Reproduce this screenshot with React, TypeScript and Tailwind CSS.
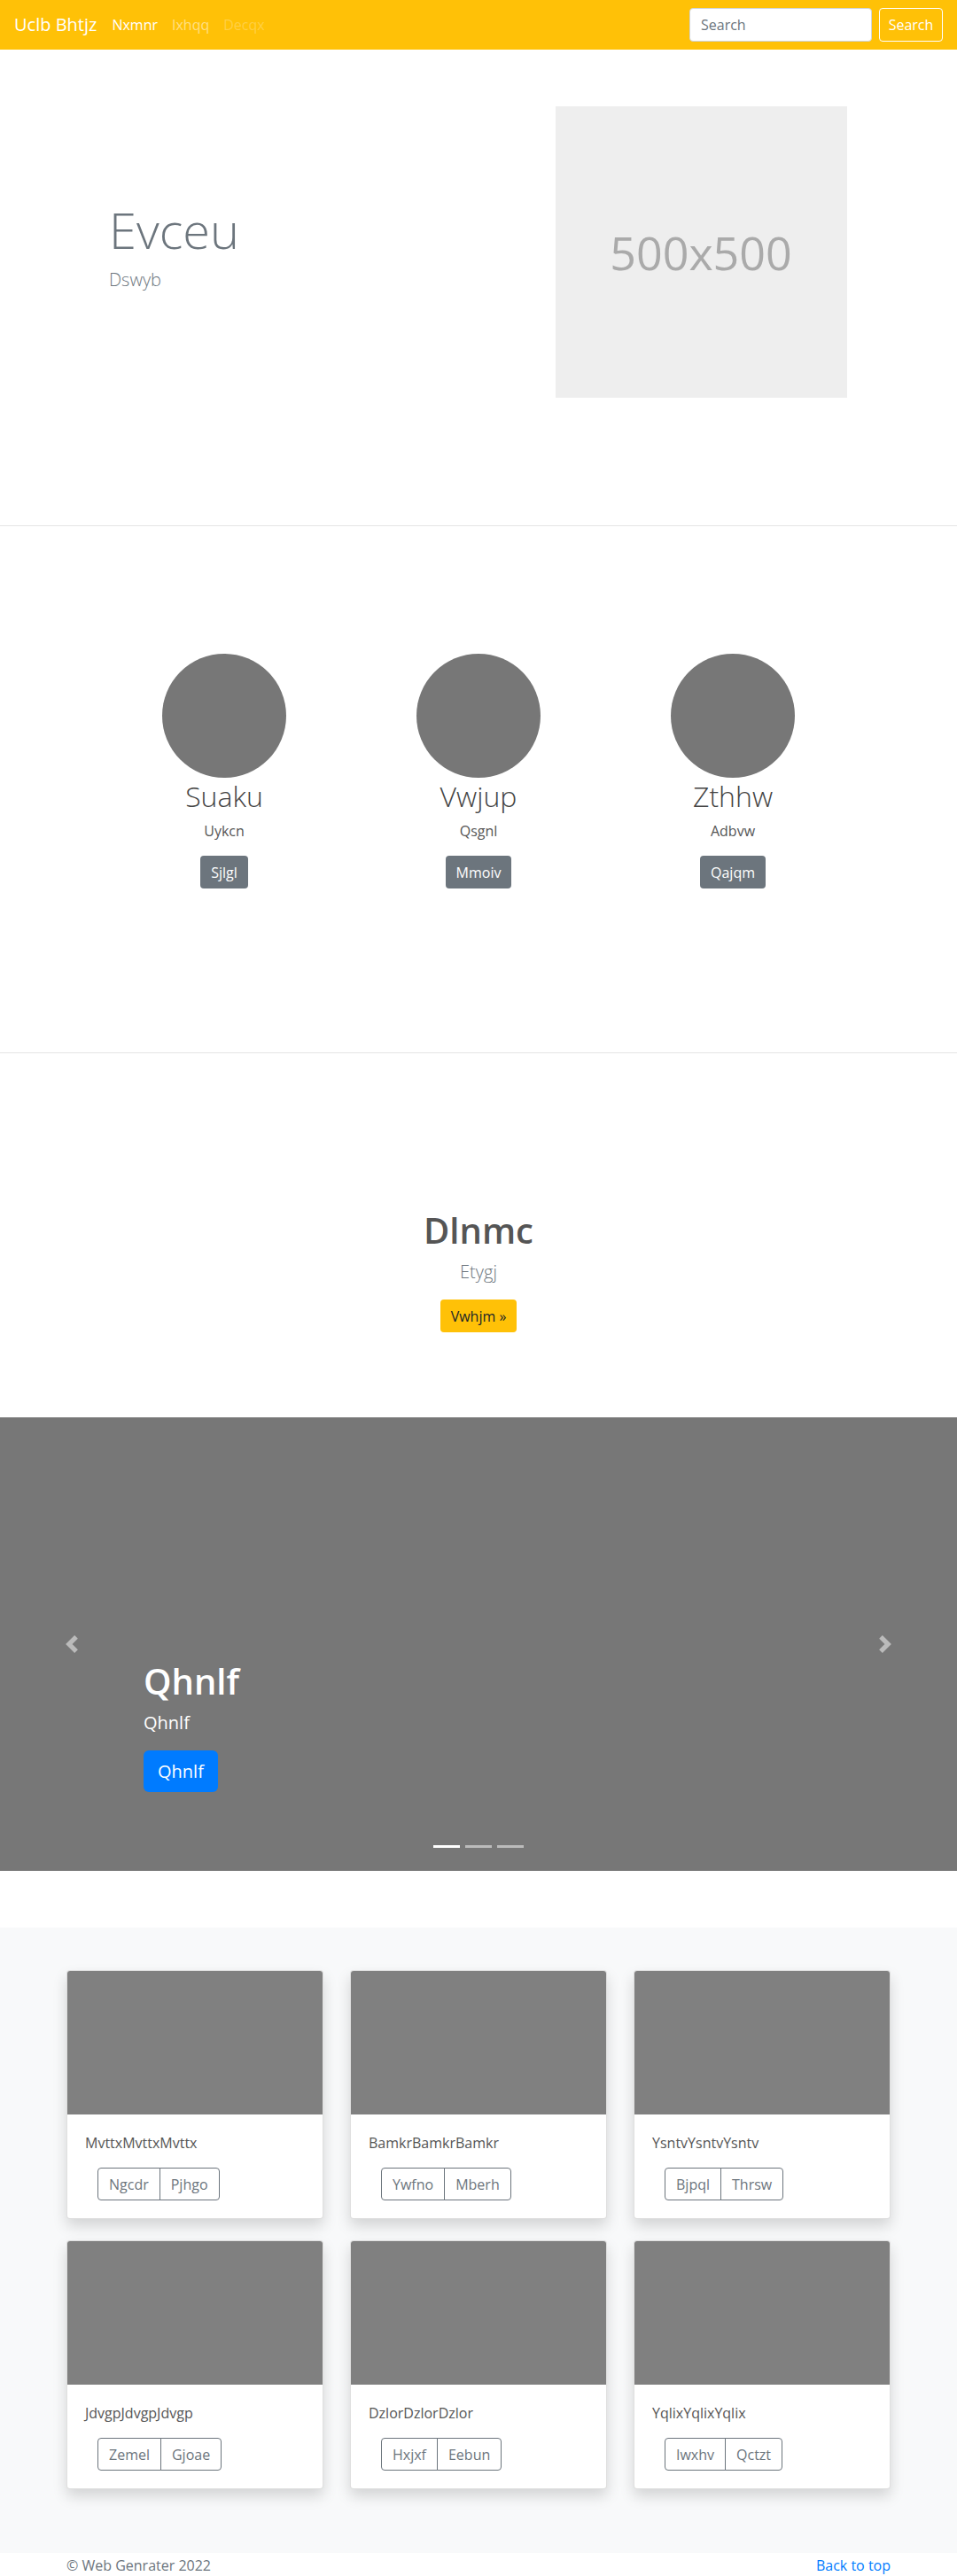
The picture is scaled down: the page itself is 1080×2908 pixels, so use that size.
const team = [
  { name: "Suaku", role: "Uykcn", action: "Sjlgl" },
  { name: "Vwjup", role: "Qsgnl", action: "Mmoiv" },
  { name: "Zthhw", role: "Adbvw", action: "Qajqm" },
];

const cards = [
  { text: "MvttxMvttxMvttx", a: "Ngcdr", b: "Pjhgo" },
  { text: "BamkrBamkrBamkr", a: "Ywfno", b: "Mberh" },
  { text: "YsntvYsntvYsntv", a: "Bjpql", b: "Thrsw" },
  { text: "JdvgpJdvgpJdvgp", a: "Zemel", b: "Gjoae" },
  { text: "DzlorDzlorDzlor", a: "Hxjxf", b: "Eebun" },
  { text: "YqlixYqlixYqlix", a: "Iwxhv", b: "Qctzt" },
];

// bootstrap-style chevron, 8x8 viewbox
function Chevron({ flip }: { flip?: boolean }) {
  return (
    <svg width="20" height="20" viewBox="0 0 8 8" fill="currentColor">
      <path
        d={flip ? "M2.75 0l-1.5 1.5 2.5 2.5-2.5 2.5 1.5 1.5 4-4-4-4z" : "M5.25 0l-4 4 4 4 1.5-1.5-2.5-2.5 2.5-2.5-1.5-1.5z"}
      />
    </svg>
  );
}

function Navbar() {
  return (
    <nav className="flex h-14 items-center justify-between bg-[#ffc107] px-4">
      <div className="flex items-center">
        <a className="mr-[9px] text-xl leading-[30px] text-white">Uclb Bhtjz</a>
        <ul className="flex text-base">
          <li className="px-2 text-white">Nxmnr</li>
          <li className="px-2 text-white/50">Ixhqq</li>
          <li className="px-2 text-white/25">Decqx</li>
        </ul>
      </div>
      <form className="flex items-center gap-2">
        <input
          className="h-[38px] w-[206px] rounded border border-[#ced4da] bg-white px-3 text-base text-[#495057] placeholder:text-[#6c757d]"
          placeholder="Search"
        />
        <button
          type="button"
          className="h-[38px] w-[72px] rounded border border-white text-base text-white"
        >
          Search
        </button>
      </form>
    </nav>
  );
}

function Hero() {
  return (
    <section className="h-[538px] border-b border-black/10 pt-16">
      <div className="mx-auto flex w-[960px]">
        <div className="flex w-1/2 flex-col justify-center px-[15px] pb-[12px]">
          <div className="px-12">
            <h1 className="mb-2 text-[56px] leading-[1.2] font-light text-[#6c757d]">
              Evceu
            </h1>
            <p className="text-xl leading-[30px] font-light text-[#6c757d]">
              Dswyb
            </p>
          </div>
        </div>
        <div className="flex w-1/2 justify-center pr-[15px] pl-[37px]">
          <div className="flex h-[329px] w-[329px] items-center justify-center bg-[#eeeeee] text-[52px] text-[#aaaaaa]">
            500x500
          </div>
        </div>
      </div>
    </section>
  );
}

function Team() {
  return (
    <section className="h-[595px] border-b border-black/10 pt-[144px]">
      <div className="mx-auto grid w-[861px] grid-cols-3 text-center">
        {team.map((m) => (
          <div key={m.name} className="flex flex-col items-center">
            <div className="h-[140px] w-[140px] rounded-full bg-[#777777]" />
            <h2 className="mt-[2px] mb-2 text-[32px] leading-[1.2] font-light text-[#444444]">
              {m.name}
            </h2>
            <p className="mb-4 text-base leading-6 text-[#555555]">{m.role}</p>
            <button
              type="button"
              className="h-[37px] rounded bg-[#6c757d] px-3 text-base text-white"
            >
              {m.action}
            </button>
          </div>
        ))}
      </div>
    </section>
  );
}

function Jumbo() {
  return (
    <section className="flex h-[411px] flex-col items-center pt-[176px] text-center">
      <h1 className="mb-2 text-[40px] leading-[1.2] font-semibold text-[#555555]">
        Dlnmc
      </h1>
      <p className="mb-4 text-xl leading-[30px] font-light text-[#6c757d]">Etygj</p>
      <button
        type="button"
        className="h-[37px] rounded bg-[#ffc107] px-3 text-base text-[#212529]"
      >
        Vwhjm »
      </button>
    </section>
  );
}

function Carousel() {
  return (
    <section className="relative h-[512px] bg-[#777777]">
      <button
        type="button"
        className="absolute inset-y-0 left-0 flex w-[15%] items-center justify-center text-white/50"
      >
        <Chevron />
      </button>
      <button
        type="button"
        className="absolute inset-y-0 right-0 flex w-[15%] items-center justify-center text-white/50"
      >
        <Chevron flip />
      </button>
      <div className="absolute bottom-[89px] left-[15%] text-white">
        <h1 className="mb-2 text-[40px] leading-[1.2] font-semibold">Qhnlf</h1>
        <p className="mb-4 text-xl leading-[30px]">Qhnlf</p>
        <button
          type="button"
          className="h-[47px] rounded-md bg-[#007bff] px-4 text-xl text-white"
        >
          Qhnlf
        </button>
      </div>
      <ol className="absolute bottom-[26px] left-0 right-0 flex justify-center gap-[6px]">
        <li className="h-[3px] w-[30px] bg-white" />
        <li className="h-[3px] w-[30px] bg-white/50" />
        <li className="h-[3px] w-[30px] bg-white/50" />
      </ol>
    </section>
  );
}

function Album() {
  return (
    <section className="mt-16 bg-[#f8f9fa] py-12">
      <div className="mx-auto grid w-[960px] grid-cols-3 gap-x-[30px] px-[15px]">
        {cards.map((c) => (
          <div
            key={c.text}
            className="mb-6 overflow-hidden rounded border border-black/[0.125] bg-white shadow-[0_0.5rem_1rem_rgba(0,0,0,0.15)]"
          >
            <div className="h-[162px] bg-[#808080]" />
            <div className="p-5">
              <p className="mb-4 text-base leading-6 text-[#555555]">{c.text}</p>
              <div className="ml-[14px] inline-flex text-base text-[#6c757d]">
                <button
                  type="button"
                  className="h-[37px] rounded-l border border-[#6c757d] px-3"
                >
                  {c.a}
                </button>
                <button
                  type="button"
                  className="-ml-px h-[37px] rounded-r border border-[#6c757d] px-3"
                >
                  {c.b}
                </button>
              </div>
            </div>
          </div>
        ))}
      </div>
    </section>
  );
}

function Footer() {
  return (
    <footer className="pt-[2px] pb-12">
      <div className="mx-auto flex w-[960px] justify-between px-[15px] text-base leading-6">
        <p className="text-[#6c757d]">© Web Genrater 2022</p>
        <a className="text-[#007bff]">Back to top</a>
      </div>
    </footer>
  );
}

export default function App() {
  return (
    <div className="bg-white" style={{ fontFamily: '"Open Sans", "Noto Sans", sans-serif' }}>
      <Navbar />
      <Hero />
      <Team />
      <Jumbo />
      <Carousel />
      <Album />
      <Footer />
    </div>
  );
}
